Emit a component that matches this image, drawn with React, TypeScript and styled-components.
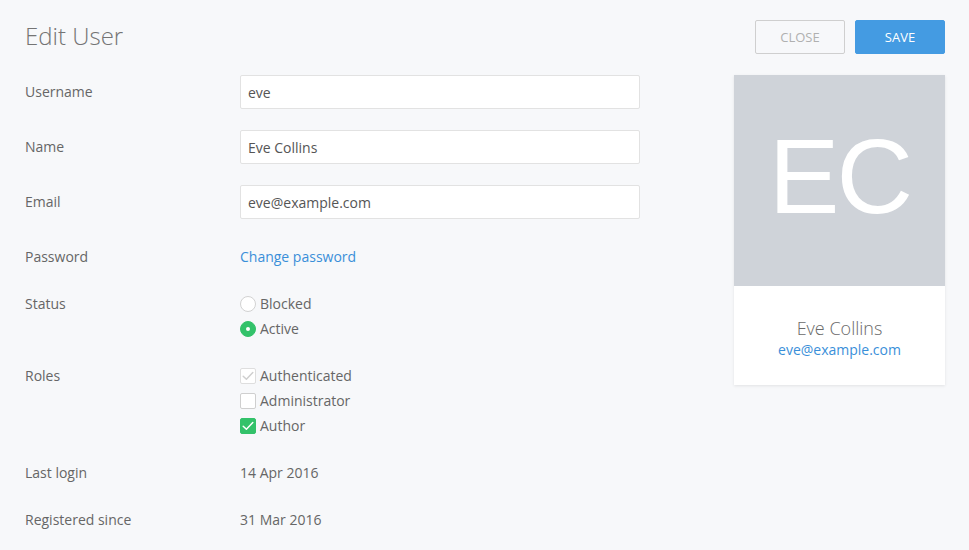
import React from "react";
import styled, { createGlobalStyle } from "styled-components";

const Global = createGlobalStyle`
  html, body { margin: 0; padding: 0; background: #f7f8fa; }
  body { font-family: "Open Sans", "Noto Sans", sans-serif; color: #555; }
  * { box-sizing: border-box; }
`;

const Page = styled.div`
  padding: 20px 24px 0 25px;
  width: 969px;
  height: 550px;
  overflow: hidden;
`;

const Header = styled.div`
  display: flex;
  align-items: center;
  justify-content: space-between;
  height: 34px;
`;

const Title = styled.h1`
  margin: 0;
  padding-bottom: 3px;
  font-weight: 300;
  font-size: 24px;
  line-height: 31px;
  color: #747474;
`;

const Actions = styled.div`
  display: flex;
  gap: 10px;
`;

const Button = styled.button<{ $primary?: boolean }>`
  width: 90px;
  height: 34px;
  border-radius: 2px;
  font-family: "Open Sans", sans-serif;
  font-size: 13px;
  text-transform: uppercase;
  cursor: pointer;
  border: 1px solid ${(p) => (p.$primary ? "#449be2" : "#cfcfcf")};
  background: ${(p) => (p.$primary ? "#449be2" : "transparent")};
  color: ${(p) => (p.$primary ? "#fff" : "#b0b0b0")};
`;

const Content = styled.div`
  display: flex;
  justify-content: space-between;
  align-items: flex-start;
  margin-top: 21px;
`;

const Form = styled.div`
  width: 615px;
  display: flex;
  flex-direction: column;
`;

const Row = styled.div<{ $gap: number }>`
  display: grid;
  grid-template-columns: 215px 400px;
  align-items: start;
  margin-top: ${(p) => p.$gap}px;
  &:first-child { margin-top: 0; }
`;

const Label = styled.div<{ $tall?: boolean }>`
  font-size: 14px;
  line-height: ${(p) => (p.$tall ? "34px" : "25px")};
  color: #666;
`;

const Input = styled.input`
  width: 400px;
  height: 34px;
  border: 1px solid #e2e2e2;
  border-radius: 2px;
  background: #fff;
  padding: 0 7px;
  font-family: "Open Sans", sans-serif;
  font-size: 14px;
  color: #555;
  outline: none;
`;

const Value = styled.div`
  font-size: 14px;
  line-height: 25px;
  color: #666;
`;

const Link = styled.a`
  font-size: 14px;
  line-height: 25px;
  color: #3a8fd9;
  text-decoration: none;
`;

const Options = styled.div`
  display: flex;
  flex-direction: column;
`;

const Option = styled.label`
  display: flex;
  align-items: center;
  gap: 4px;
  height: 25px;
  font-size: 14px;
  color: #666;
`;

const Radio = styled.span<{ $on?: boolean }>`
  width: 16px;
  height: 16px;
  border-radius: 50%;
  display: flex;
  align-items: center;
  justify-content: center;
  background: ${(p) => (p.$on ? "#33c26a" : "#fff")};
  border: 1px solid ${(p) => (p.$on ? "#33c26a" : "#d2d2d2")};
  &::after {
    content: "";
    display: ${(p) => (p.$on ? "block" : "none")};
    width: 4px;
    height: 4px;
    border-radius: 50%;
    background: #fff;
  }
`;

type BoxState = "off" | "on" | "disabled";

const Box = styled.span<{ $state: BoxState }>`
  width: 16px;
  height: 16px;
  border-radius: 2px;
  display: flex;
  align-items: center;
  justify-content: center;
  background: ${(p) => (p.$state === "on" ? "#33c26a" : "#fff")};
  border: 1px solid
    ${(p) => (p.$state === "on" ? "#33c26a" : p.$state === "disabled" ? "#dedede" : "#cfcfcf")};
`;

const Check = ({ color }: { color: string }) => (
  <svg width="12" height="10" viewBox="0 0 12 10">
    <path d="M1.2 5.2 L4.4 8.2 L10.8 1.6" fill="none" stroke={color} strokeWidth="1.5" strokeLinecap="round" strokeLinejoin="round" />
  </svg>
);

const Card = styled.div`
  width: 211px;
  background: #fff;
  box-shadow: 0 1px 3px rgba(0, 0, 0, 0.09);
`;

const Avatar = styled.div`
  width: 211px;
  height: 211px;
  background: #cfd3d9;
  display: flex;
  align-items: center;
  justify-content: center;
  color: #fff;
  font-family: "Liberation Sans", Arial, sans-serif;
  font-size: 106px;
  letter-spacing: -3px;
  line-height: 1;
  padding-left: 0;
  padding-bottom: 10px;
`;

const CardBody = styled.div`
  padding: 30px 10px 25px;
  text-align: center;
`;

const CardName = styled.div`
  font-size: 18px;
  font-weight: 300;
  line-height: 24px;
  color: #6a6a6a;
`;

const CardEmail = styled.a`
  display: block;
  font-size: 14px;
  line-height: 20px;
  color: #3a8fd9;
  text-decoration: none;
`;

export default function App() {
  return (
    <>
      <Global />
      <Page>
        <Header>
          <Title>Edit User</Title>
          <Actions>
            <Button>Close</Button>
            <Button $primary>Save</Button>
          </Actions>
        </Header>
        <Content>
          <Form>
            <Row $gap={0}>
              <Label $tall>Username</Label>
              <Input defaultValue="eve" />
            </Row>
            <Row $gap={21}>
              <Label $tall>Name</Label>
              <Input defaultValue="Eve Collins" />
            </Row>
            <Row $gap={21}>
              <Label $tall>Email</Label>
              <Input defaultValue="eve@example.com" />
            </Row>
            <Row $gap={25}>
              <Label>Password</Label>
              <div>
                <Link href="#">Change password</Link>
              </div>
            </Row>
            <Row $gap={22}>
              <Label>Status</Label>
              <Options>
                <Option>
                  <Radio />
                  Blocked
                </Option>
                <Option>
                  <Radio $on />
                  Active
                </Option>
              </Options>
            </Row>
            <Row $gap={22}>
              <Label>Roles</Label>
              <Options>
                <Option>
                  <Box $state="disabled">
                    <Check color="#cfcfcf" />
                  </Box>
                  Authenticated
                </Option>
                <Option>
                  <Box $state="off" />
                  Administrator
                </Option>
                <Option>
                  <Box $state="on">
                    <Check color="#fff" />
                  </Box>
                  Author
                </Option>
              </Options>
            </Row>
            <Row $gap={22}>
              <Label>Last login</Label>
              <Value>14 Apr 2016</Value>
            </Row>
            <Row $gap={22}>
              <Label>Registered since</Label>
              <Value>31 Mar 2016</Value>
            </Row>
          </Form>
          <Card>
            <Avatar>EC</Avatar>
            <CardBody>
              <CardName>Eve Collins</CardName>
              <CardEmail href="#">eve@example.com</CardEmail>
            </CardBody>
          </Card>
        </Content>
      </Page>
    </>
  );
}
